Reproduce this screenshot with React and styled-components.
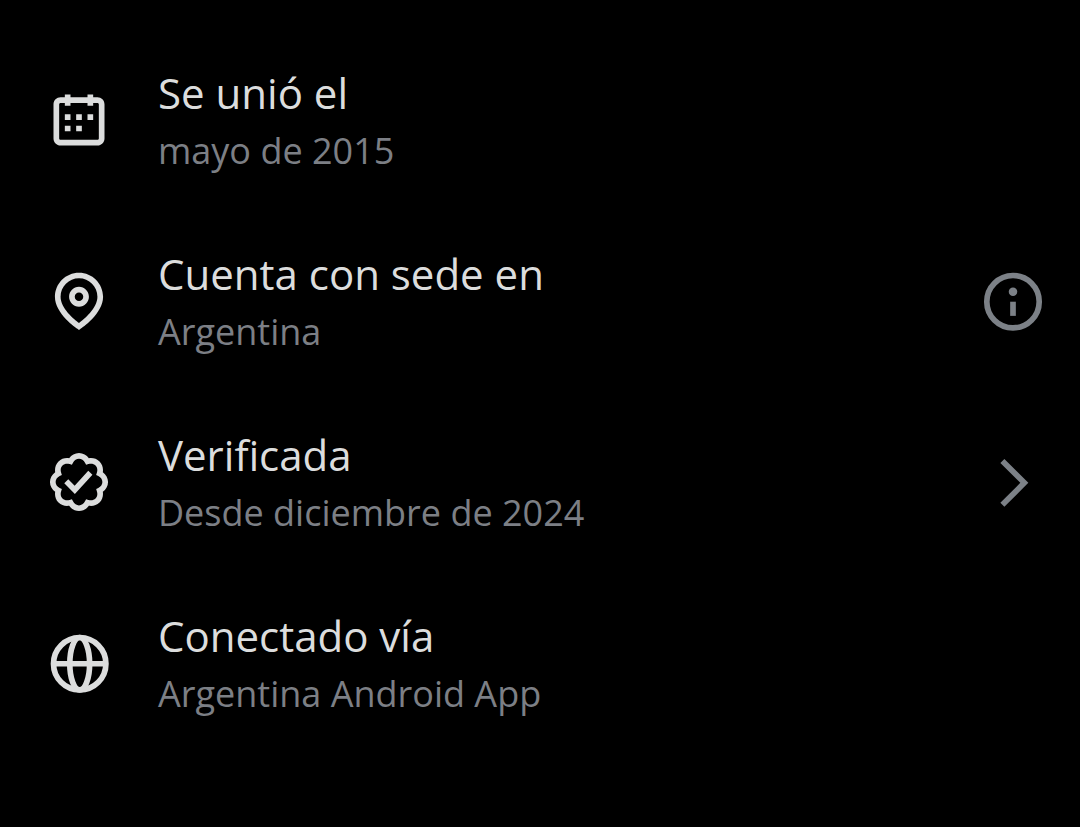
import React from "react";
import styled, { createGlobalStyle } from "styled-components";

const GlobalStyle = createGlobalStyle`
  body {
    margin: 0;
    background: #000;
    color: #dcdddd;
    font-family: "Open Sans", "Noto Sans", sans-serif;
  }
`;

const List = styled.ul`
  list-style: none;
  margin: 0;
  padding: 30px 33px 30px 45px;
`;

const Row = styled.li`
  display: flex;
  align-items: center;
  gap: 45px;
  padding: 34px 0 35px;
`;

const Icon = styled.svg`
  display: block;
  flex: none;
  width: 68px;
  height: 68px;
  fill: currentColor;
`;

const Details = styled.div`
  display: flex;
  flex-direction: column;
  flex: 1;
  gap: 4px;
  min-width: 0;
`;

const Title = styled.div`
  font-size: 42px;
  line-height: 58px;
`;

const Subtitle = styled.div`
  font-size: 36px;
  line-height: 50px;
  color: #7c7f85;
`;

const ActionButton = styled.button`
  flex: none;
  padding: 0;
  border: 0;
  background: none;
  color: #7c8187;
  cursor: pointer;
`;

function CalendarIcon() {
  return (
    <Icon viewBox="0 0 24 24" aria-hidden="true">
      <path d="M7 4V3h2v1h6V3h2v1h1.5C19.89 4 21 5.12 21 6.5v12c0 1.38-1.11 2.5-2.5 2.5h-13C4.12 21 3 19.88 3 18.5v-12C3 5.12 4.12 4 5.5 4H7zm0 2H5.5c-.27 0-.5.22-.5.5v12c0 .28.23.5.5.5h13c.28 0 .5-.22.5-.5v-12c0-.28-.22-.5-.5-.5H17v1h-2V6H9v1H7V6zm0 6h2v-2H7v2zm0 4h2v-2H7v2zm4-4h2v-2h-2v2zm0 4h2v-2h-2v2zm4-4h2v-2h-2v2z" />
    </Icon>
  );
}

function PinIcon() {
  return (
    <Icon viewBox="0 0 24 24" aria-hidden="true">
      <path d="M12 7c-1.93 0-3.5 1.57-3.5 3.5S10.07 14 12 14s3.5-1.57 3.5-3.5S13.93 7 12 7zm0 5c-.827 0-1.5-.673-1.5-1.5S11.173 9 12 9s1.5.673 1.5 1.5S12.827 12 12 12zm0-10c-4.687 0-8.5 3.813-8.5 8.5 0 5.967 7.621 11.116 7.945 11.332l.555.37.555-.37c.324-.216 7.945-5.365 7.945-11.332C20.5 5.813 16.687 2 12 2zm0 17.77c-1.665-1.241-6.5-5.196-6.5-9.27C5.5 6.916 8.416 4 12 4s6.5 2.916 6.5 6.5c0 4.073-4.835 8.028-6.5 9.27z" />
    </Icon>
  );
}

function VerifiedIcon() {
  return (
    <Icon viewBox="0 0 24 24" aria-hidden="true">
      <path d="M8.52 3.59c.8-1.1 2.04-1.84 3.48-1.84s2.68.74 3.49 1.84c1.34-.21 2.74.14 3.76 1.16s1.37 2.42 1.16 3.77c1.1.8 1.84 2.04 1.84 3.48s-.74 2.68-1.84 3.48c.21 1.34-.14 2.75-1.16 3.77s-2.42 1.37-3.76 1.16c-.8 1.1-2.05 1.84-3.49 1.84s-2.68-.74-3.48-1.84c-1.34.21-2.75-.14-3.76-1.16-1.02-1.02-1.37-2.42-1.17-3.77-1.09-.8-1.84-2.04-1.84-3.48s.75-2.68 1.84-3.48c-.2-1.35.15-2.75 1.17-3.77s2.42-1.37 3.76-1.16zm3.48.16c-.85 0-1.66.53-2.12 1.43l-.38.77-.82-.27c-.96-.32-1.91-.12-2.51.49-.6.6-.8 1.54-.49 2.51l.27.81-.77.39c-.9.46-1.43 1.27-1.43 2.12s.53 1.66 1.43 2.12l.77.39-.27.81c-.31.97-.11 1.91.49 2.51.6.61 1.55.81 2.51.49l.82-.27.38.77c.46.9 1.27 1.43 2.12 1.43s1.66-.53 2.12-1.43l.39-.77.82.27c.96.32 1.9.12 2.51-.49.6-.6.8-1.55.48-2.51l-.26-.81.76-.39c.91-.46 1.43-1.27 1.43-2.12s-.52-1.66-1.43-2.12l-.77-.39.27-.81c.32-.97.12-1.91-.48-2.51-.61-.61-1.55-.81-2.51-.49l-.82.27-.39-.77c-.46-.9-1.27-1.43-2.12-1.43zm4.74 5.68l-6.2 6.77-3.74-3.74 1.41-1.42 2.26 2.26 4.8-5.23 1.47 1.36z" />
    </Icon>
  );
}

function GlobeIcon() {
  return (
    <Icon viewBox="0 0 24 24" aria-hidden="true">
      <g fill="none" stroke="currentColor" strokeWidth="2">
        <circle cx="12.25" cy="12.25" r="9.25" />
        <ellipse cx="12.25" cy="12.25" rx="3.5" ry="9.25" />
        <path d="M3 12.25h18.5" />
      </g>
    </Icon>
  );
}

function InfoIcon() {
  return (
    <Icon viewBox="0 0 24 24" aria-hidden="true">
      <circle cx="12" cy="12.25" r="9.25" fill="none" stroke="currentColor" strokeWidth="2" />
      <circle cx="12" cy="8.75" r="1.5" />
      <path d="M11 12.25h2v5h-2z" />
    </Icon>
  );
}

function ChevronIcon() {
  return (
    <Icon viewBox="0 0 24 24" aria-hidden="true">
      <path d="M14.586 12.3L7.543 5.26l1.414-1.42L17.414 12.3l-8.457 8.46-1.414-1.42L14.586 12.3z" />
    </Icon>
  );
}

const items = [
  { icon: CalendarIcon, title: "Se unió el", subtitle: "mayo de 2015" },
  {
    icon: PinIcon,
    title: "Cuenta con sede en",
    subtitle: "Argentina",
    action: InfoIcon,
    label: "Más información",
  },
  {
    icon: VerifiedIcon,
    title: "Verificada",
    subtitle: "Desde diciembre de 2024",
    action: ChevronIcon,
    label: "Ver detalles",
  },
  { icon: GlobeIcon, title: "Conectado vía", subtitle: "Argentina Android App" },
];

export default function App() {
  return (
    <main>
      <GlobalStyle />
      <List>
        {items.map(({ icon: Leading, title, subtitle, action: Action, label }) => (
          <Row key={title}>
            <Leading />
            <Details>
              <Title>{title}</Title>
              <Subtitle>{subtitle}</Subtitle>
            </Details>
            {Action && (
              <ActionButton type="button" aria-label={label}>
                <Action />
              </ActionButton>
            )}
          </Row>
        ))}
      </List>
    </main>
  );
}
